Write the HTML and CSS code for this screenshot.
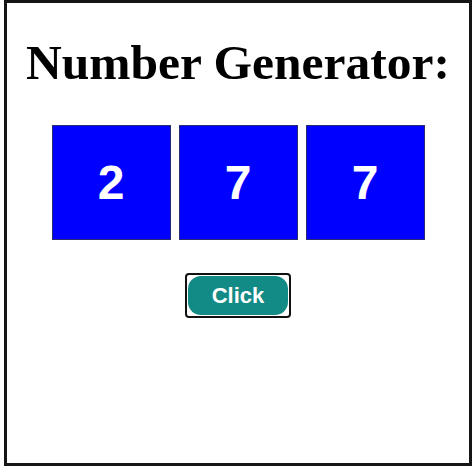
FILE: index.html
```html
<!DOCTYPE html>
<html>
<head>
<meta charset="utf-8">
<link rel="stylesheet" href="styles.css">
</head>
<body>
<div class="frame">
  <h1 class="title">Number Generator:</h1>
  <div class="boxes">
    <div class="box">2</div>
    <div class="box">7</div>
    <div class="box">7</div>
  </div>
  <div class="btn-ring"><button class="btn">Click</button></div>
</div>
</body>
</html>
```
FILE: styles.css
```css
html, body {
  margin: 0;
  padding: 0;
  background: #ffffff;
}
.frame {
  box-sizing: border-box;
  width: 468px;
  height: 466px;
  margin-left: 4px;
  border: 3px solid #151515;
  display: flex;
  flex-direction: column;
  align-items: center;
  padding-top: 31px;
}
.title {
  margin: 0;
  font-family: "Liberation Serif", "Times New Roman", serif;
  font-weight: bold;
  font-size: 49.5px;
  line-height: 58px;
  color: #000;
}
.boxes {
  display: flex;
  gap: 8px;
  margin-top: 33px;
}
.box {
  box-sizing: border-box;
  width: 119px;
  height: 115px;
  background: #0000ff;
  border: 1px solid #2b2b70;
  color: #fff;
  font-family: "Liberation Sans", Arial, sans-serif;
  font-weight: bold;
  font-size: 48px;
  display: flex;
  align-items: center;
  justify-content: center;
}
.btn-ring {
  margin-top: 33px;
  border: 2px solid #111;
  border-radius: 4px;
  padding: 1px;
  background: #fff;
  display: flex;
}
.btn {
  width: 100px;
  height: 39px;
  border: none;
  border-radius: 13px;
  background: #128a85;
  color: #fff;
  font-family: "Liberation Sans", Arial, sans-serif;
  font-weight: bold;
  font-size: 22px;
  padding: 0;
  cursor: pointer;
}
```
